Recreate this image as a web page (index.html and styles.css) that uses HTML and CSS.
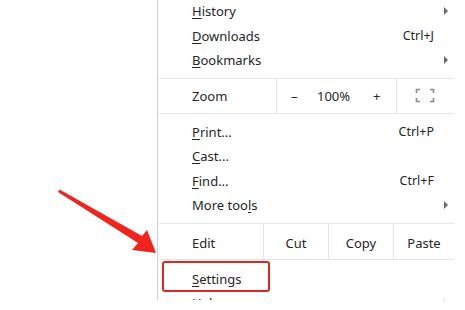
FILE: index.html
```html
<!DOCTYPE html>
<html>
<head>
<meta charset="utf-8">
<link rel="stylesheet" href="styles.css">
</head>
<body>
<div class="page">
  <svg class="pointer" width="120" height="80" viewBox="0 0 120 80">
    <polygon points="8,9 9.5,6.5 92,53 97,47 106,70 82,67 88,60" fill="#f2231c"/>
  </svg>
  <div class="menu">
    <div class="group first">
      <div class="row"><span class="label"><u>H</u>istory</span><span class="sub"></span></div>
      <div class="row"><span class="label"><u>D</u>ownloads</span><span class="key">Ctrl+J</span></div>
      <div class="row"><span class="label"><u>B</u>ookmarks</span><span class="sub"></span></div>
    </div>
    <div class="strip zoom">
      <div class="cell name">Zoom</div>
      <div class="cell ctrl"><span class="minus">–</span><span class="pct">100%</span><span class="plus">+</span></div>
      <div class="cell full">
        <svg width="20" height="15" viewBox="0 0 20 15">
          <path d="M1.5 5V1.5H5M15 1.5h3.5V5M18.5 10v3.5H15M5 13.5H1.5V10" fill="none" stroke="#8a8a8a" stroke-width="1.6"/>
        </svg>
      </div>
    </div>
    <div class="group">
      <div class="row"><span class="label"><u>P</u>rint...</span><span class="key">Ctrl+P</span></div>
      <div class="row"><span class="label"><u>C</u>ast...</span></div>
      <div class="row"><span class="label"><u>F</u>ind...</span><span class="key">Ctrl+F</span></div>
      <div class="row"><span class="label">More too<u>l</u>s</span><span class="sub"></span></div>
    </div>
    <div class="strip edit">
      <div class="cell name">Edit</div>
      <div class="cell btn cut">Cut</div>
      <div class="cell btn copy">Copy</div>
      <div class="cell btn paste">Paste</div>
    </div>
    <div class="group last">
      <div class="row"><span class="label"><u>S</u>ettings</span><span class="mark"></span></div>
      <div class="row"><span class="label"><u>H</u>elp</span><span class="sub"></span></div>
    </div>
  </div>
</div>
</body>
</html>
```
FILE: styles.css
```css
html, body {
  margin: 0;
  padding: 0;
  background: #ffffff;
}
body {
  font-family: "Noto Sans", "Open Sans", sans-serif;
  font-size: 13px;
  color: #262626;
}
.page {
  position: relative;
  width: 465px;
  height: 310px;
  overflow: hidden;
}
.pointer {
  position: absolute;
  left: 50px;
  top: 183px;
}
.menu {
  margin-left: 157px;
  width: 296px;
  height: 300px;
  overflow: hidden;
  border-left: 1px solid #cfcfcf;
}
.group {
  padding: 6px 0 5px;
}
.group.first {
  padding-top: 0;
  margin-top: -1px;
}
.group.last {
  padding-top: 7px;
}
.row {
  position: relative;
  display: flex;
  align-items: center;
  height: 24.5px;
  padding-left: 34px;
  padding-right: 20px;
}
.label {
  flex: 1;
}
.label u {
  text-decoration-thickness: 1px;
  text-underline-offset: 2px;
}
.key {
  font-size: 12.5px;
}
.sub {
  position: absolute;
  right: 6px;
  top: 50%;
  margin-top: -4px;
  width: 0;
  height: 0;
  border-top: 4px solid transparent;
  border-bottom: 4px solid transparent;
  border-left: 4px solid #6a6a6a;
}
.mark {
  position: absolute;
  left: 4px;
  top: -6px;
  width: 104px;
  height: 27px;
  border: 2px solid #e52620;
  border-radius: 3px;
}
.strip {
  display: flex;
  border-top: 1px solid #e6e6e6;
  border-bottom: 1px solid #e6e6e6;
}
.zoom {
  height: 34px;
}
.edit {
  height: 35px;
}
.cell {
  display: flex;
  align-items: center;
}
.zoom .cell {
  padding-top: 1px;
}
.edit .cell {
  padding-top: 3px;
}
.cell + .cell {
  border-left: 1px solid #e6e6e6;
}
.name {
  padding-left: 34px;
}
.zoom .name {
  width: 84px;
}
.zoom .ctrl {
  width: 120px;
  padding-left: 14px;
  box-sizing: border-box;
}
.minus {
  width: 26px;
}
.pct {
  width: 56px;
}
.zoom .full {
  flex: 1;
  justify-content: center;
}
.full svg {
  display: block;
  margin-top: -2px;
  margin-left: -2px;
}
.edit .name {
  width: 71px;
}
.btn {
  justify-content: center;
  width: 64px;
}
.btn.paste {
  flex: 1;
}
```
